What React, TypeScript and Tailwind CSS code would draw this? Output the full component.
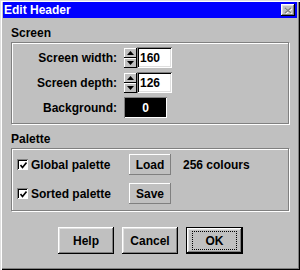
import React from "react";

const raised =
  "bg-[#c0c0c0] shadow-[inset_-1px_-1px_#000,inset_1px_1px_#fff,inset_-2px_-2px_#808080,inset_2px_2px_#dfdfdf]";
const sunken =
  "shadow-[inset_1px_1px_#808080,inset_-1px_-1px_#fff,inset_2px_2px_#000,inset_-2px_-2px_#dfdfdf]";

const Spinner = () => (
  <div className="flex flex-col w-[13px] h-[20px]">
    {[0, 1].map((i) => (
      <div
        key={i}
        className="flex-1 flex items-center justify-center bg-[#c0c0c0] shadow-[inset_-1px_-1px_#000,inset_1px_1px_#fff]"
      >
        <svg width="7" height="4" viewBox="0 0 7 4">
          <polygon
            points={i === 0 ? "3.5,0 7,4 0,4" : "0,0 7,0 3.5,4"}
            fill="#000"
          />
        </svg>
      </div>
    ))}
  </div>
);

const NumberField = ({ value }: { value: string }) => (
  <div className="flex items-center">
    <Spinner />
    <div
      className={`w-[35px] h-[21px] bg-white flex items-center pl-[3px] ${sunken}`}
    >
      {value}
    </div>
  </div>
);

const Check = ({ label }: { label: string }) => (
  <div className="flex items-center gap-[3px]">
    <div
      className={`w-[11px] h-[11px] bg-white flex items-center justify-center shadow-[inset_1px_1px_#808080,inset_-1px_-1px_#fff,inset_2px_2px_#000]`}
    >
      <svg width="7" height="7" viewBox="0 0 7 7" className="ml-[1px] mt-[1px]">
        <polyline points="0.5,3 2.5,5.5 6.5,0.5" fill="none" stroke="#000" strokeWidth="1.6" />
      </svg>
    </div>
    <span>{label}</span>
  </div>
);

const SmallButton = ({ label }: { label: string }) => (
  <div
    className={`w-[42px] h-[21px] flex items-center justify-center shadow-[inset_-1px_-1px_#808080,inset_1px_1px_#fff] bg-[#c0c0c0]`}
  >
    {label}
  </div>
);

const Group = ({ className, children }: { className: string; children: React.ReactNode }) => (
  <div
    className={`mx-[11px] shadow-[inset_1px_1px_#808080,inset_-1px_-1px_#808080,1px_1px_#fff,inset_2px_2px_#fff] ${className}`}
  >
    {children}
  </div>
);

export default function App() {
  return (
    <div
      className="w-[300px] h-[270px] bg-[#c0c0c0] text-black text-[12px] font-bold leading-none shadow-[inset_1px_1px_#dfdfdf,inset_2px_2px_#fff,inset_-1px_-1px_#000,inset_-2px_-2px_#808080] pt-[2px] px-[3px] flex flex-col"
      style={{ fontFamily: '"Liberation Sans", Arial, sans-serif' }}
    >
      {/* title bar */}
      <div className="h-[16px] bg-[#0000ff] flex items-center justify-between pl-[1px] pr-[2px]">
        <span className="text-white text-[12px]">Edit Header</span>
        <div className={`w-[14px] h-[12px] flex items-center justify-center ${raised}`}>
          <svg width="8" height="7" viewBox="0 0 8 7">
            <path d="M1 1 L7 6 M7 1 L1 6" stroke="#fff" strokeWidth="1.5" transform="translate(0.7,0.7)" />
            <path d="M1 1 L7 6 M7 1 L1 6" stroke="#808080" strokeWidth="1.5" />
          </svg>
        </div>
      </div>

      <div className="-mx-[3px] flex flex-col">
        <div className="pl-[11px] mt-[8px] h-[14px] flex items-center">Screen</div>

        <Group className="mt-[2px] pt-[5px] pb-[6px]">
          <div className="grid grid-cols-[106px_auto] gap-x-[7px] gap-y-[4px] items-center">
            <div className="text-right">Screen width:</div>
            <NumberField value="160" />
            <div className="text-right">Screen depth:</div>
            <NumberField value="126" />
            <div className="text-right">Background:</div>
            <div
              className={`w-[43px] h-[21px] bg-black text-white flex items-center justify-center shadow-[inset_1px_1px_#808080,inset_-1px_-1px_#fff,inset_2px_2px_#000]`}
            >
              0
            </div>
          </div>
        </Group>

        <div className="pl-[11px] mt-[9px] h-[12px] flex items-center">Palette</div>

        <Group className="mt-[3px] pt-[6px] pb-[7px] pl-[6px]">
          <div className="grid grid-cols-[100px_42px_auto] gap-x-[12px] gap-y-[8px] items-center">
            <Check label="Global palette" />
            <SmallButton label="Load" />
            <span>256 colours</span>
            <Check label="Sorted palette" />
            <SmallButton label="Save" />
            <span />
          </div>
        </Group>

        <div className="mt-[16px] flex justify-center gap-[8px] pl-[1px]">
          {["Help", "Cancel"].map((b) => (
            <div key={b} className={`w-[56px] h-[27px] flex items-center justify-center ${raised}`}>
              {b}
            </div>
          ))}
          <div className="w-[57px] h-[27px] border border-black">
            <div className={`w-full h-full flex items-center justify-center ${raised}`}>
              <span className="border border-dotted border-black w-[45px] h-[19px] flex items-center justify-center">
                OK
              </span>
            </div>
          </div>
        </div>
      </div>
    </div>
  );
}
